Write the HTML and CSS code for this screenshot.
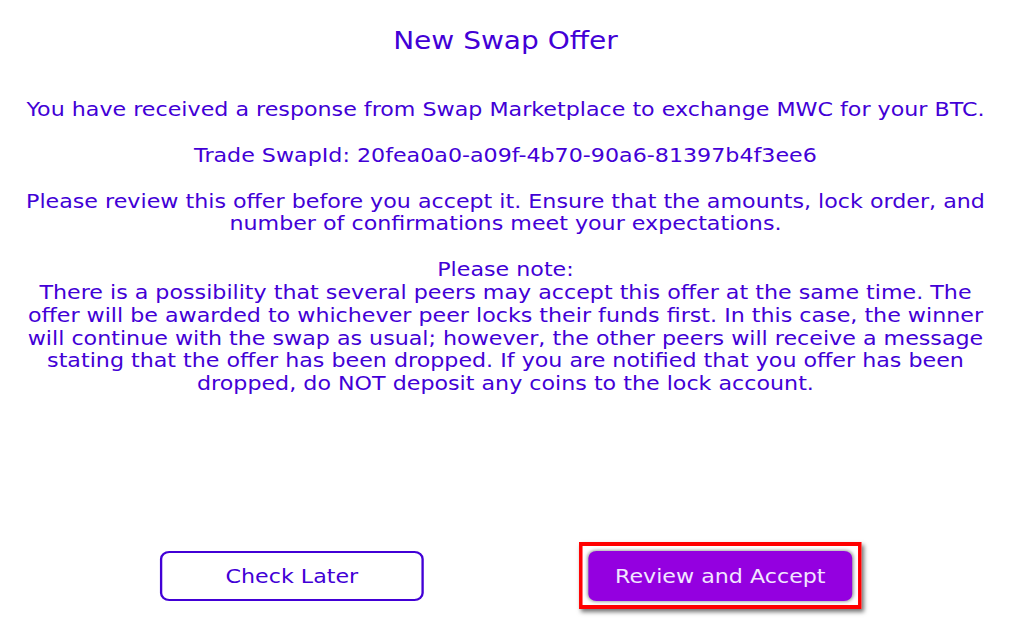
FILE: index.html
```html
<!DOCTYPE html>
<html>
<head>
<meta charset="utf-8">
<link rel="stylesheet" href="styles.css">
</head>
<body>
<div class="page">
  <h1 class="title">New Swap Offer</h1>
  <p class="line first">You have received a response from Swap Marketplace to exchange MWC for your BTC.</p>
  <p class="line">Trade SwapId: 20fea0a0-a09f-4b70-90a6-81397b4f3ee6</p>
  <p class="line">Please review this offer before you accept it. Ensure that the amounts, lock order, and number of confirmations meet your expectations.</p>
  <p class="line">Please note:<br>There is a possibility that several peers may accept this offer at the same time. The offer will be awarded to whichever peer locks their funds first. In this case, the winner will continue with the swap as usual; however, the other peers will receive a message stating that the offer has been dropped. If you are notified that you offer has been dropped, do NOT deposit any coins to the lock account.</p>
  <div class="spacer"></div>
  <div class="actions">
    <button class="btn outline">Check Later</button>
    <div class="highlight"><button class="btn primary">Review and Accept</button></div>
  </div>
</div>
</body>
</html>
```
FILE: styles.css
```css
html, body {
  margin: 0;
  padding: 0;
  background: #ffffff;
  overflow: hidden;
}
body {
  font-family: "DejaVu Sans", sans-serif;
  color: #4200d6;
  width: 1011px;
  height: 625px;
}
.page {
  width: 866px;
  height: 625px;
  display: flex;
  flex-direction: column;
  align-items: center;
  box-sizing: border-box;
  padding: 26px 20px 0;
  transform: scaleX(1.1674);
  transform-origin: 0 0;
}
.title {
  font-size: 24px;
  font-weight: normal;
  margin: 0;
  line-height: 30px;
}
.line {
  font-size: 19px;
  line-height: 22.8px;
  text-align: center;
  margin: 23px 0 0;
}
.line.first {
  margin-top: 42px;
}
.spacer {
  flex: 1;
}
.actions {
  display: flex;
  align-items: center;
  gap: 133px;
  margin-bottom: 16px;
  margin-left: 9px;
}
.btn {
  font-family: "DejaVu Sans", sans-serif;
  font-size: 19px;
  cursor: pointer;
  padding: 0;
}
.btn.outline {
  width: 226px;
  height: 50px;
  background: #ffffff;
  color: #4200d6;
  border: 2px solid #4200d6;
  border-radius: 8px;
}
.highlight {
  display: flex;
  border: 4px solid #ff0000;
  border-left-width: 3.4px;
  border-right-width: 3.4px;
  padding: 5px 5px 4px;
  background: #ffffff;
  box-shadow: 2px 3px 4px rgba(0, 0, 0, 0.55);
}
.btn.primary {
  width: 226px;
  height: 50px;
  background: #9400e0;
  color: #f2e6ff;
  border: none;
  border-radius: 7px;
  box-shadow: 0 0 3px 1px rgba(0, 0, 0, 0.35);
}
```
